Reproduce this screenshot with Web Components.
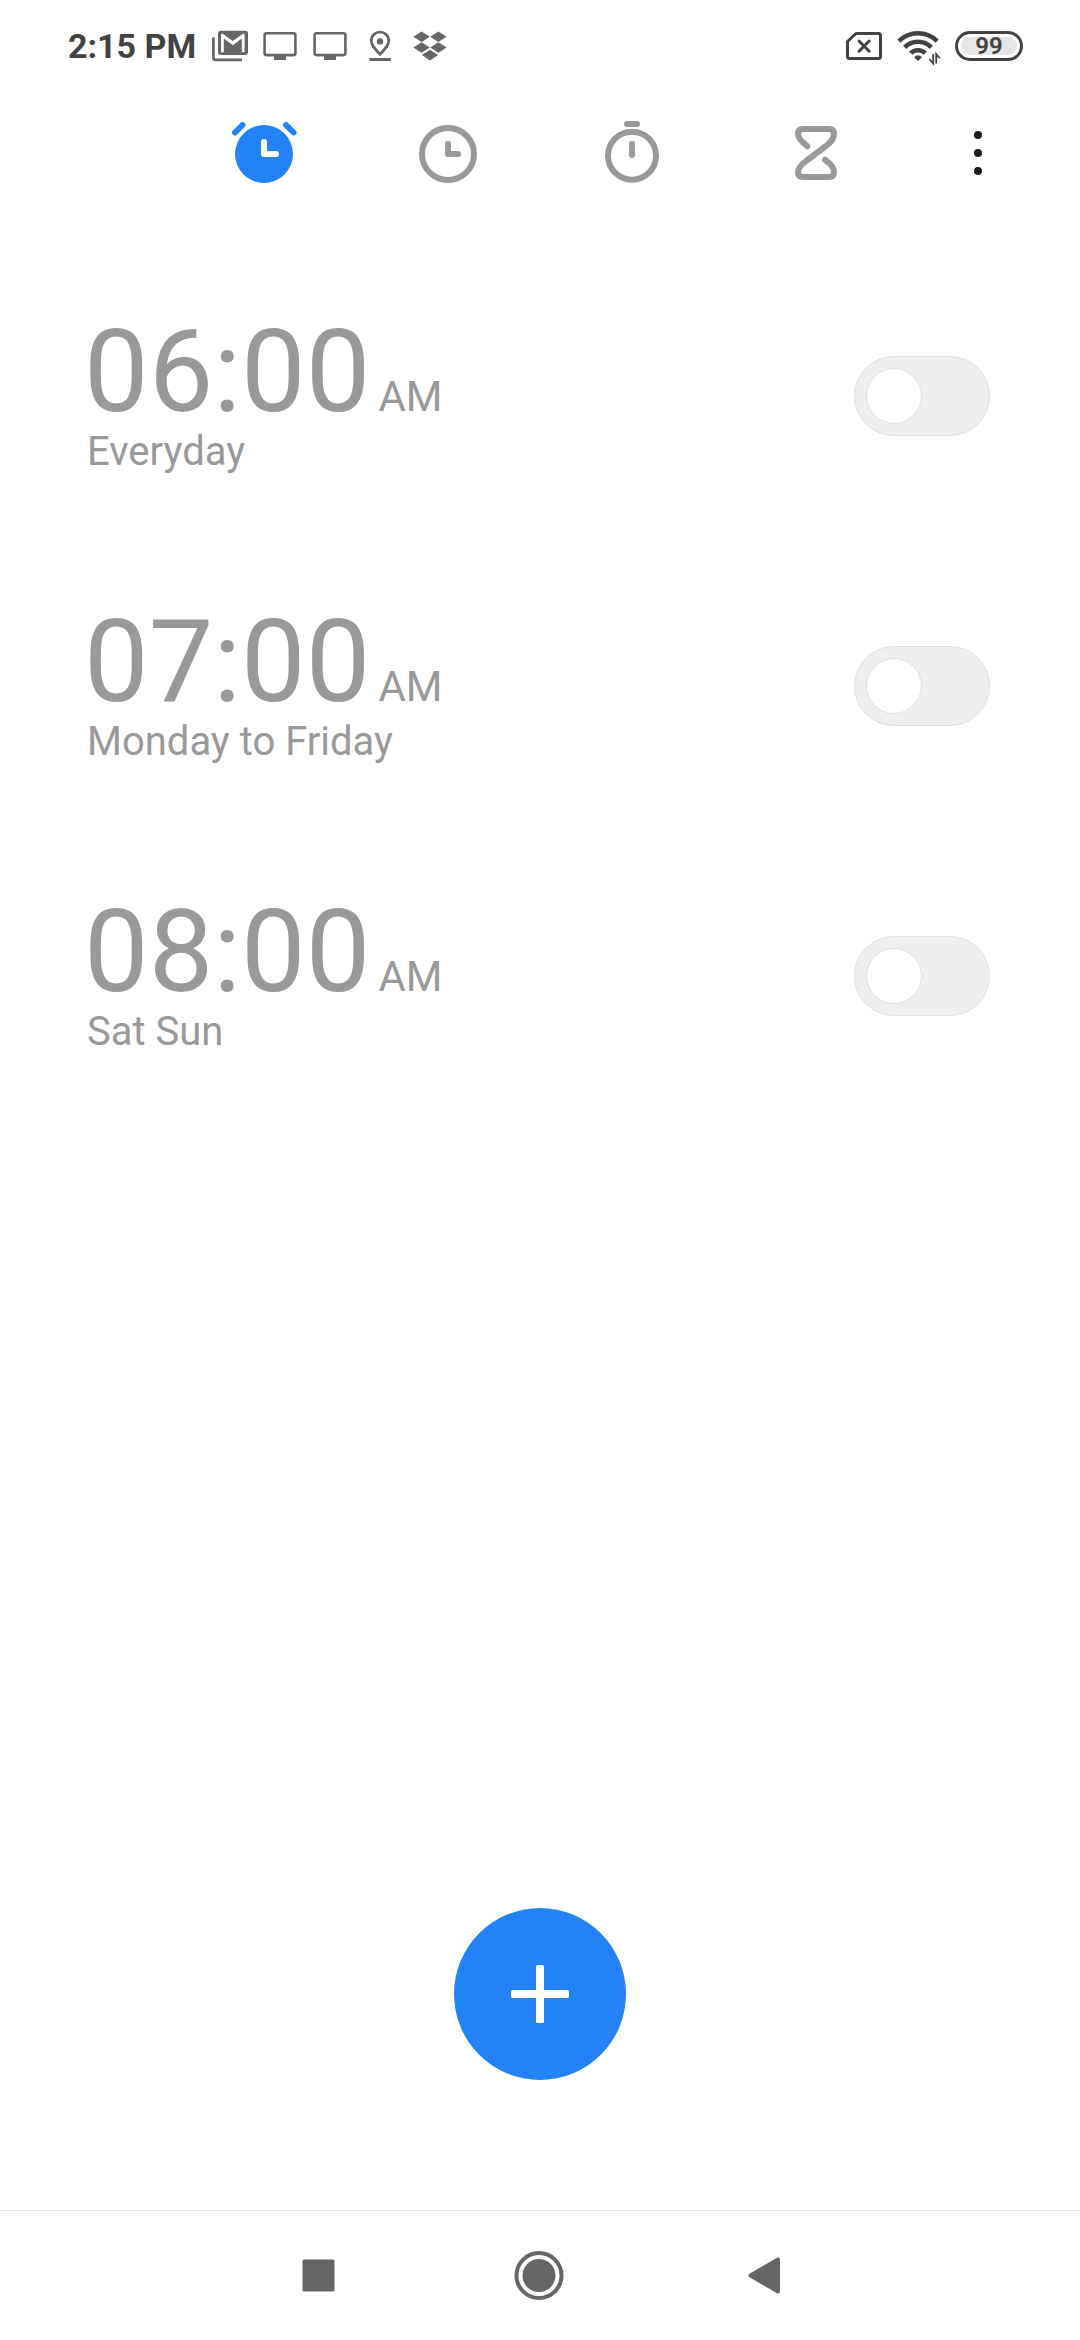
<!DOCTYPE html>
<html lang="en">
<head>
<meta charset="utf-8">
<meta name="viewport" content="width=device-width, initial-scale=1">
<title>Clock</title>
<style>
  body { margin: 0; background: #fff; font-family: Roboto, "Liberation Sans", sans-serif; }
</style>
</head>
<body>
<clock-app>
  <status-bar slot="status" time="2:15 PM" battery="99"></status-bar>
  <clock-tabs slot="tabs"></clock-tabs>
  <alarm-row name="alarm-6"><time slot="time">06:00</time><span slot="period">AM</span><span slot="days">Everyday</span></alarm-row>
  <alarm-row name="alarm-7"><time slot="time">07:00</time><span slot="period">AM</span><span slot="days">Monday to Friday</span></alarm-row>
  <alarm-row name="alarm-8"><time slot="time">08:00</time><span slot="period">AM</span><span slot="days">Sat Sun</span></alarm-row>
  <add-button slot="action"></add-button>
  <nav-bar slot="nav"></nav-bar>
</clock-app>

<script>
const base = `
  *, *::before { box-sizing: border-box; }
  svg { display: block; flex: none; overflow: visible; }
  button { appearance: none; border: 0; margin: 0; padding: 0; background: none; font: inherit; color: inherit; cursor: pointer;
           display: flex; align-items: center; justify-content: center; }
`;
const define = (name, render) => customElements.define(name, class extends HTMLElement {
  constructor() { super(); this.attachShadow({ mode: 'open' }); }
  connectedCallback() { this.shadowRoot.innerHTML = `<style>${base}</style>` + render(this); }
});

define('clock-app', () => `
  <style>
    :host { display: flex; flex-direction: column; min-height: 100vh; }
    main { flex: 1; padding-top: 35px; }
    .action { display: flex; justify-content: center; padding-bottom: 130px; }
  </style>
  <slot name="status"></slot>
  <slot name="tabs"></slot>
  <main><slot></slot></main>
  <div class="action"><slot name="action"></slot></div>
  <slot name="nav"></slot>`);

define('status-bar', el => `
  <style>
    :host { display: flex; align-items: center; justify-content: space-between; height: 92px; padding: 0 57px 0 68px; color: #424242; }
    .left, .right { display: flex; align-items: center; }
    .left { gap: 9px; }
    .right { gap: 15px; }
    .time { font-size: 34px; line-height: 40px; font-weight: 700; }
    .notes { display: flex; color: #666; }
    .battery { width: 68px; height: 30px; border: 3px solid #424242; border-radius: 15px; padding: 3px; }
    .level { height: 18px; border-radius: 9px; background: #e6e6e6; display: flex; align-items: center; justify-content: center;
             font-size: 24px; line-height: 18px; font-weight: 600; }
  </style>
  <div class="left">
    <span class="time">${el.getAttribute('time')}</span>
    <div class="notes">
      <svg width="50" height="50" viewBox="0 0 50 50" fill="currentColor">
        <rect x="13" y="9.8" width="30" height="24.2" rx="3"/>
        <path d="M8.4 16V36.4a2 2 0 0 0 2 2H37" transform="translate(0 .4)" fill="none" stroke="currentColor" stroke-width="2.7"/>
        <path d="M16 31.2V13.2L17.4 12.4L27.8 20L38.2 12.4L39.6 13.2V31.2H36.8V17.6L27.8 24.2L18.8 17.6V31.2Z" fill="#fff"/>
      </svg>
      <svg width="50" height="50" viewBox="0 0 50 50"><rect x="9.6" y="12.3" width="30.8" height="21.8" rx="2" fill="none" stroke="currentColor" stroke-width="2.6"/><path d="M19 34h12v5H19z" fill="currentColor"/></svg>
      <svg width="50" height="50" viewBox="0 0 50 50"><rect x="9.6" y="12.3" width="30.8" height="21.8" rx="2" fill="none" stroke="currentColor" stroke-width="2.6"/><path d="M19 34h12v5H19z" fill="currentColor"/></svg>
      <svg width="50" height="50" viewBox="0 0 50 50"><path d="M25 33.3C20 28 16.2 24 16.2 19.8a8.8 8.8 0 0 1 17.6 0C33.8 24 30 28 25 33.3Z" fill="none" stroke="currentColor" stroke-width="2.7"/><circle cx="25" cy="20.4" r="3.2" fill="currentColor"/><path d="M14.4 37h21.4v3H14.4z" fill="currentColor"/></svg>
      <svg width="50" height="50" viewBox="0 0 50 50" fill="currentColor">
        <path d="M16.6 10.4l8.2 5.3-8.2 5.3-8.2-5.3zM33.4 10.4l8.2 5.3-8.2 5.3-8.2-5.3zM16.6 21.2l8.2 5.3-8.2 5.3-8.2-5.3zM33.4 21.2l8.2 5.3-8.2 5.3-8.2-5.3zM25 28.8l8.2 5.3-8.2 5.3-8.2-5.3z"/>
      </svg>
    </div>
  </div>
  <div class="right">
    <svg width="36" height="30" viewBox="-1 0 36 30" fill="none" stroke="currentColor" stroke-width="3">
      <path d="M10 2.5H32.5a2 2 0 0 1 2 2V25.5a2 2 0 0 1-2 2H3.5a2 2 0 0 1-2-2V10.5Z" stroke-linejoin="round"/>
      <path d="M13 10l10.2 10.2M23.2 10L13 20.2" stroke-linecap="round"/>
    </svg>
    <svg width="44" height="36" viewBox="0 0 44 36" fill="none" stroke="currentColor" stroke-width="4.6">
      <path d="M2.9 13.2A27 27 0 0 1 41.1 13.2M8.7 19.4A18.5 18.5 0 0 1 35.3 19.4M14.7 25.2A10.5 10.5 0 0 1 29.3 25.2"/>
      <path d="M18.2 29.5C20 26.5 24 26.5 25.8 29.5L22 33Z" fill="currentColor" stroke="none"/>
      <path d="M37.2 26V35.5L33.3 31.2M40.2 35.5V26L43.6 30.2" stroke-width="1.8"/>
    </svg>
    <div class="battery"><div class="level">${el.getAttribute('battery')}</div></div>
  </div>`);

define('clock-tabs', () => `
  <style>
    :host { display: grid; grid-template-columns: repeat(4, 1fr) 140px; height: 124px; padding: 0 32px 0 172px; color: #999; }
    .on { color: #2383f6; }
    .more { color: #1a1a1a; }
    svg { fill: none; stroke: currentColor; stroke-width: 6; stroke-linecap: round; stroke-linejoin: round; }
    .more svg { fill: currentColor; stroke: none; }
  </style>
  <button class="on" aria-label="Alarm" aria-current="page">
    <svg width="80" height="80" viewBox="0 0 80 80"><circle cx="40" cy="40" r="29" fill="currentColor" stroke="none"/><path d="M40 28V40H52" stroke="#fff"/><path d="M11 18.5L18.5 11M62 11L69.5 18.5"/></svg>
  </button>
  <button aria-label="Clock">
    <svg width="80" height="80" viewBox="0 0 80 80"><circle cx="40" cy="40" r="26"/><path d="M40 30V40H50"/></svg>
  </button>
  <button aria-label="Stopwatch">
    <svg width="80" height="80" viewBox="0 0 80 80"><circle cx="40" cy="41.7" r="24"/><path d="M35 10H45M40 30V41"/></svg>
  </button>
  <button aria-label="Timer">
    <svg width="80" height="80" viewBox="0 0 80 80"><path d="M31.3 32.3L26.5 28C23.5 25 22 23 22 20Q22 15 27 15H53Q58 15 58 20C58 25 55 28 50 32L30 47C25 51 22 54 22 58Q22 63 27 63H53Q58 63 58 58C58 54 55 50 49 45.7"/></svg>
  </button>
  <button class="more" aria-label="More options">
    <svg width="80" height="80" viewBox="0 0 80 80"><circle cx="40" cy="21" r="4"/><circle cx="40" cy="39" r="4"/><circle cx="40" cy="57" r="4"/></svg>
  </button>`);

define('alarm-row', el => `
  <style>
    :host { display: block; color: #999; }
    label { display: flex; align-items: center; justify-content: space-between; height: 290px; padding: 0 90px 0 84px; cursor: pointer; }
    .when { display: flex; align-items: baseline; gap: 8px; }
    slot { display: block; }
    slot[name=time] { font-size: 115px; line-height: 112px; }
    slot[name=period] { font-size: 42px; line-height: 48px; }
    slot[name=days] { font-size: 40px; line-height: 48px; padding-left: 3px; }
    input { appearance: none; margin: 0; width: 136px; height: 80px; padding: 0 11px; border: 1px solid #dfdfdf; border-radius: 40px;
            background: #efefef; display: flex; align-items: center; cursor: pointer; }
    input::before { content: ""; width: 56px; height: 56px; border: 1px solid #dfdfdf; border-radius: 50%; background: #fff; }
    input:checked { background: #2383f6; justify-content: flex-end; }
  </style>
  <label>
    <span>
      <div class="when"><slot name="time"></slot><slot name="period"></slot></div>
      <slot name="days"></slot>
    </span>
    <input type="checkbox" role="switch" name="${el.getAttribute('name')}">
  </label>`);

define('add-button', () => `
  <style>
    :host { display: block; }
    button { width: 172px; height: 172px; border-radius: 50%; background: #2383f6; color: #fff; }
  </style>
  <button aria-label="Add alarm">
    <svg width="58" height="58" viewBox="0 0 58 58" fill="currentColor"><rect y="25" width="58" height="8" rx="1.5"/><rect x="25" width="8" height="58" rx="1.5"/></svg>
  </button>`);

define('nav-bar', () => `
  <style>
    :host { display: block; border-top: 1px solid #e4e4e4; color: #666; }
    nav { display: grid; grid-template-columns: repeat(3, 1fr); height: 129px; padding: 0 208px; }
    svg { fill: currentColor; }
  </style>
  <nav>
    <button aria-label="Recent apps"><svg width="49" height="49" viewBox="0 0 49 49"><rect x="8.5" y="8.5" width="32" height="32" rx="1.5"/></svg></button>
    <button aria-label="Home"><svg width="49" height="49" viewBox="0 0 49 49"><circle cx="24" cy="24.5" r="16.5"/><circle cx="24" cy="24.5" r="22.5" fill="none" stroke="currentColor" stroke-width="4"/></svg></button>
    <button aria-label="Back"><svg width="49" height="49" viewBox="0 0 49 49"><path d="M13.5 24.500L41 8.500V40.500Z" stroke="currentColor" stroke-width="4" stroke-linejoin="round"/></svg></button>
  </nav>`);
</script>
</body>
</html>
